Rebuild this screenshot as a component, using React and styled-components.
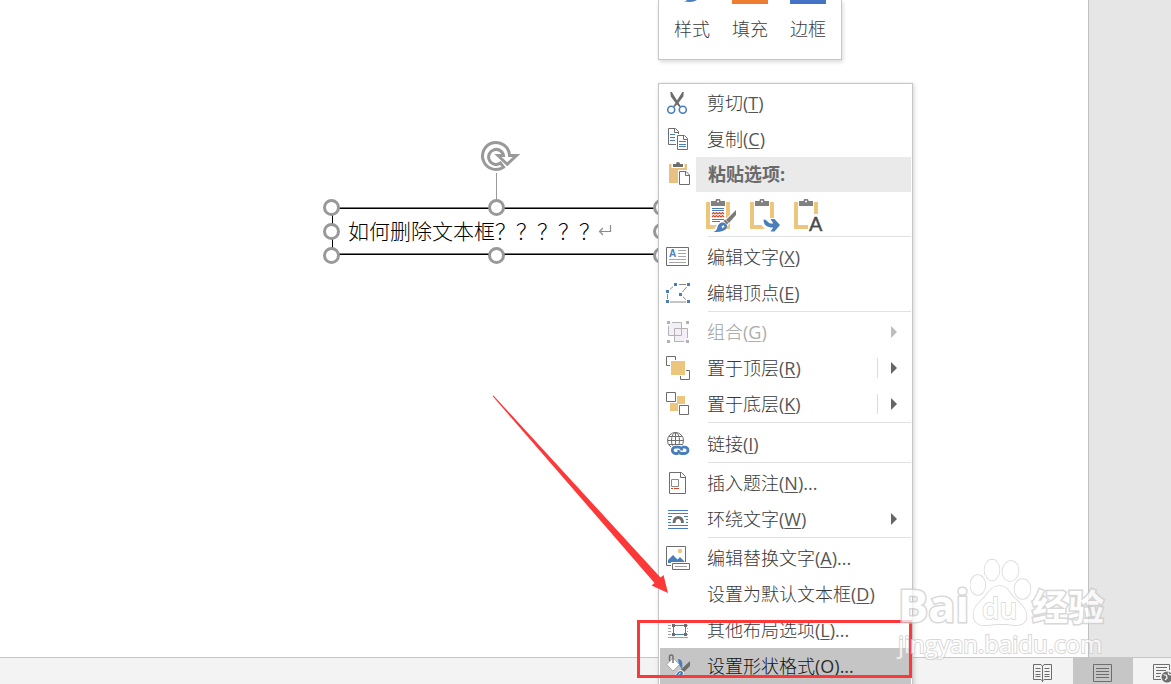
import React from "react";
import styled, { createGlobalStyle } from "styled-components";

const UI_FONT = `"Open Sans", "Noto Sans CJK SC", sans-serif`;

const GlobalStyle = createGlobalStyle`
  *, *::before, *::after { box-sizing: border-box; }
  body { margin: 0; background: #fff; font-family: ${UI_FONT}; }
  button { font: inherit; color: inherit; border: 0; margin: 0; padding: 0; background: none; }
  svg { display: block; flex: none; }
`;

const Screen = styled.div`
  position: relative;
  display: flex;
  flex-direction: column;
  height: 100vh;
  overflow: hidden;
`;

const Workspace = styled.main`
  display: flex;
  flex: 1;
  background: #e6e6e6;
`;

const Paper = styled.section`
  position: relative;
  flex: 1;
  background: #fff;
  border-right: 1px solid #c0c0c0;
`;

const Gutter = styled.div`
  width: 82px;
`;

/* Selected text box on the document canvas */

const TextBox = styled.div`
  position: absolute;
  left: 332px;
  top: 208px;
  width: 330px;
  height: 47px;
  padding: 0 0 4px 15px;
  display: flex;
  align-items: center;
  border: 1px solid #000;
  box-shadow: 0 -1px 0 #777, inset 0 -1px 0 #777;
  font: 300 21px/30px "Noto Sans CJK SC", sans-serif;
  color: #000;
`;

const ParagraphMark = styled.svg`
  margin: 2px 0 0 -2px;
`;

const Handle = styled.span`
  position: absolute;
  left: ${(p) => p.$x};
  top: ${(p) => p.$y};
  width: 17px;
  height: 17px;
  margin: -8px;
  border: 3px solid #999;
  border-radius: 50%;
  background: #fff;
`;

const RotateStem = styled.span`
  position: absolute;
  left: 50%;
  bottom: 100%;
  width: 1px;
  height: 34px;
  background: #999;
`;

const RotateHandle = styled.svg`
  position: absolute;
  left: 146px;
  top: -70px;
`;

/* Mini toolbar */

const MiniToolbar = styled.div`
  position: absolute;
  left: 658px;
  top: 0;
  height: 60px;
  padding: 0 15px;
  display: flex;
  gap: 22px;
  background: #fff;
  border: solid #c6c6c6;
  border-width: 0 1px 1px;
  box-shadow: 1px 2px 4px rgba(0, 0, 0, 0.15);
`;

const MiniButton = styled.button`
  width: 36px;
  display: flex;
  flex-direction: column;
  align-items: center;
  gap: 12px;
  font-size: 18px;
  font-weight: 300;
  line-height: 26px;
  color: #3c3c3c;
`;

const Swatch = styled.span`
  width: 36px;
  height: 4px;
  background: ${(p) => p.$color};
`;

/* Context menu */

const Menu = styled.div`
  position: absolute;
  left: 658px;
  top: 83px;
  width: 255px;
  padding: 1px 1px 8px 0;
  display: flex;
  flex-direction: column;
  background: #fff;
  border: 1px solid #c6c6c6;
  box-shadow: 1px 1px 4px rgba(0, 0, 0, 0.18);
`;

const Item = styled.button`
  display: flex;
  align-items: center;
  gap: 17px;
  margin-left: 1px;
  padding: 6px 14px 6px 6px;
  text-align: left;
  font-size: 18px;
  font-weight: 300;
  line-height: 24px;
  color: ${(p) => (p.$active ? "#111" : "#383838")};
  background: ${(p) => (p.$active ? "#c5c5c5" : "transparent")};
  &:disabled { color: #a0a0a0; }
`;

const IconSlot = styled.span`
  width: 24px;
  min-height: 24px;
  flex: none;
`;

const Label = styled.span`
  flex: 1;
  white-space: nowrap;
`;

const Latin = styled.span`
  font-weight: 400;
  opacity: 0.85;
`;

const Key = styled.span`
  text-decoration: underline;
  text-decoration-thickness: 1px;
  text-underline-offset: 2px;
`;

const SplitLine = styled.span`
  width: 1px;
  height: 20px;
  margin-right: -4px;
  background: #dcdcdc;
`;

const Separator = styled.hr`
  width: 203px;
  height: 1px;
  margin: 0 0 2px auto;
  border: 0;
  background: #dfe1e3;
`;

const PasteHeading = styled.div`
  display: flex;
  padding-left: 7px;
  gap: 6px;
`;

const PasteIconBox = styled.span`
  padding-top: 5px;
`;

const PasteTitle = styled.strong`
  flex: 1;
  height: 35px;
  padding-left: 12px;
  background: #eaeaea;
  font-size: 18px;
  font-weight: 700;
  line-height: 34px;
  color: #6a6a6a;
`;

const PasteOptions = styled.div`
  display: flex;
  gap: 14px;
  padding: 7px 0 1px 47px;
`;

/* Status bar */

const StatusBar = styled.footer`
  display: flex;
  justify-content: flex-end;
  height: 27px;
  background: #f3f3f3;
  border-top: 1px solid #c6c6c6;
  overflow: hidden;
`;

const ViewButtons = styled.div`
  display: flex;
  margin-right: -22px;
`;

const ViewButton = styled.button`
  width: 60px;
  padding: 6px 0 0 20px;
  display: flex;
  align-items: flex-start;
  background: ${(p) => (p.$active ? "#c6c6c6" : "transparent")};
`;

/* Annotations and watermark */

const RedFrame = styled.div`
  position: absolute;
  left: 637px;
  top: 620px;
  width: 275px;
  height: 58px;
  border: 3px solid #fd3838;
  pointer-events: none;
`;

const RedArrow = styled.svg`
  position: absolute;
  left: 492px;
  top: 395px;
  pointer-events: none;
`;

const Watermark = styled.div`
  position: absolute;
  left: 898px;
  top: 556px;
  width: 212px;
  color: #fff;
  -webkit-text-stroke: 3px #cbcbcb;
  paint-order: stroke fill;
  opacity: 0.75;
  pointer-events: none;
`;

const WatermarkRow = styled.div`
  display: flex;
  align-items: flex-end;
  height: 72px;
`;

const BrandText = styled.span`
  width: ${(p) => p.$width};
  white-space: nowrap;
  font-family: ${(p) => p.$family};
  font-size: ${(p) => p.$size};
  font-weight: 700;
  line-height: 46px;
`;

const SiteText = styled.div`
  font: 500 24px/32px "Open Sans", sans-serif;
  white-space: nowrap;
  -webkit-text-stroke-width: 2px;
`;

const G = "#6d6d6d";
const B = "#4a7ebb";
const T = "#edc67e";

const Svg = ({ h = 24, children }) => (
  <svg width="24" height={h} viewBox={`0 0 24 ${h}`} fill="none" aria-hidden="true">
    {children}
  </svg>
);

const CutIcon = () => (
  <Svg>
    <path d="M4.3 1 5.8 1 12.6 12 15 15.6 13.3 16 10 12.6 4.8 5.4Z" fill={G} />
    <path d="M17.8 1 16.3 1 9.5 12 7 15.6 8.7 16 12 12.6 17.3 5.4Z" fill={G} />
    <circle cx="5.2" cy="18.8" r="3.5" stroke={B} strokeWidth="1.6" />
    <circle cx="16.8" cy="18.8" r="3.5" stroke={B} strokeWidth="1.6" />
  </Svg>
);

const CopyIcon = () => (
  <Svg>
    <path d="M2.5 1.5h7l3 3v13h-10z" fill="#fff" stroke={G} />
    <path d="M8.5 1.5v4h4" stroke={G} />
    <path d="M4 7.5h5M4 10.5h5M4 13.5h5" stroke={B} />
    <path d="M10 7h8l5 5v12H10z" fill="#fff" />
    <path d="M11.5 8.5h7l3 3v11h-10z" fill="#fff" stroke={G} />
    <path d="M17.5 8.5v4h4" stroke={G} />
    <path d="M13 14.5h7M13 17.5h7M13 19.5h7" stroke={B} />
  </Svg>
);

const PasteIcon = () => (
  <Svg>
    <path d="M3 2h18v19H3z" fill="#e8c182" />
    <path d="M5.500 1h13v5h-13z" fill="#fff" />
    <path d="M7 2h3a2 2 0 0 1 4 0h3v3H7z" fill={G} />
    <path d="M12 8h12v16H12z" fill="#fff" />
    <path d="M13.500 9.500h6.500l3.500 3.500v9.500h-10z" fill="#fff" stroke={G} />
    <path d="M19.500 9.500v4h4" stroke={G} />
  </Svg>
);

const Clipboard = () => (
  <>
    <path d="M0 3h24v27H0z" fill={T} />
    <path d="M4 7h16v19H4z" fill="#fff" />
    <path d="M4 2h16v6H4z" fill="#fff" />
    <path d="M5 2h4.500a2.500 2.500 0 0 1 5 0H19v5H5z" fill="#808080" />
    <circle cx="12" cy="2.500" r="1" fill="#fff" />
  </>
);

const PasteSvg = ({ children }) => (
  <svg width="30" height="36" viewBox="0 0 30 36" fill="none" aria-hidden="true">
    <Clipboard />
    {children}
  </svg>
);

const KeepSourceIcon = () => (
  <PasteSvg>
    <path d="M6 9.500h12M6 11.500h12M6 20.500h12M6 22.500h8" stroke={B} />
    <path d="M6 15l1.500-1.500L9 15l1.500-1.500L12 15l1.500-1.500L15 15l1.500-1.500L18 15M6 18l1.500-1.500L9 18l1.500-1.500L12 18l1.500-1.500L15 18l1.500-1.500L18 18" stroke="#d24726" strokeWidth="1.2" />
    <path d="M30 9v9L20 28l-3 6H5l7-9 7-4z" fill="#fff" />
    <path d="M30 11v5l-7 8-3-3z" fill="#7a7a7a" />
    <path d="M19 20.500l3.500 3.500-1.500 1.500-3.500-3.500z" fill="#7a7a7a" />
    <path d="M16.500 23.500c2 0 4.500 1.500 4.500 3.500 0 4-4 6-13.500 6 3-1 3.500-3 4-5 .6-2.500 2.500-4.500 5-4.500z" fill={B} />
    <path d="M15.500 27.500l2-1.500 1 1.500-2 2z" fill="#fff" />
  </PasteSvg>
);

const MergeIcon = () => (
  <PasteSvg>
    <path d="M12 19h12v-2l6 8-7 9h-4l-7-7z" fill="#fff" />
    <path d="M13.500 20.500c5 .5 4 4.500 9 4h.8l-2.800-4.500h4l5.500 6-5.500 6.500h-4l2.800-4h-.8c-5 0-9-2-9-8z" fill={B} />
  </PasteSvg>
);

const TextOnlyIcon = () => (
  <PasteSvg>
    <path d="M18 15h6l6 17v2H14v-7z" fill="#fff" />
    <text x="15" y="32" fontFamily="Liberation Sans, sans-serif" fontSize="20" fill="#4a4a4a" stroke="#4a4a4a" strokeWidth="0.4">A</text>
  </PasteSvg>
);

const EditTextIcon = () => (
  <Svg>
    <path d="M.5 2.500h22v18H.5z" fill="#fff" stroke={G} />
    <path d="M12 5.500h8M12 8.500h8M12 11.500h8M3 14.500h17M3 17.500h17" stroke="#a6a6a6" />
    <text x="3" y="12" fontFamily="Liberation Sans, sans-serif" fontWeight="700" fontSize="10" fill={B}>A</text>
  </Svg>
);

const EditPointsIcon = () => (
  <Svg>
    <path d="M9.500 3.500h13l-8 10 8 7.500h-21V10.500z" stroke="#8c8c8c" />
    <path d="M7 1h6v5H7zM20 1h4v5h-4zM0 8h4v5H0zM12 11h5v5h-5zM0 18h4v5H0zM20 18h4v5h-4z" fill="#fff" />
    <path d="M8 2h3v3H8zM21 2h3v3h-3zM0 9h3v3H0zM13 12h3v3h-3zM0 19h3v3H0zM21 19h3v3h-3z" fill={B} />
  </Svg>
);

const GroupIcon = () => (
  <Svg>
    <path d="M2.500 2.500h13v13h-13zM8.500 8.500h13v13h-13z" fill="#f4eff7" />
    <path d="M6 2.500h9.500v13h-13V6M8.500 8.500h13V18M18 21.500H8.500v-13" stroke="#b3b3b3" />
    <path d="M1 1h3v3H1zM20 1h3v3h-3zM1 20h3v3H1zM20 20h3v3h-3z" fill="#b3b3b3" />
  </Svg>
);

const FrontIcon = () => (
  <Svg>
    <path d="M.5.5h9v9h-9zM14.500 14.500h9v9h-9z" fill="#fff" stroke={G} />
    <path d="M4 4h16v16H4z" fill="#fff" />
    <path d="M5 5h14v14H5z" fill={T} />
  </Svg>
);

const BackIcon = () => (
  <Svg>
    <path d="M11 4h8v8h-8zM4 11h8v8H4z" fill={T} />
    <path d="M0 0h11v11H0zM12 12h12v12H12z" fill="#fff" />
    <path d="M.5.5h9v9h-9zM13.500 13.500h9v9h-9z" fill="#fff" stroke={G} />
  </Svg>
);

const LinkIcon = () => (
  <Svg h={25}>
    <circle cx="9.500" cy="9.500" r="8" stroke={G} />
    <ellipse cx="9.500" cy="9.500" rx="4" ry="8" stroke={G} />
    <path d="M9.500 1.500v16M1.500 9.500h16M3 5.500h13M3 13.500h13" stroke={G} />
    <rect x="4" y="14" width="20" height="11" rx="5" fill="#fff" />
    <path d="M12.500 22.500H9.500a3.200 3.200 0 0 1 0-6.400h3.300c2 0 3.200 1.600 2.700 3.400" stroke={B} strokeWidth="2.800" />
    <path d="M15.800 16.100h3a3.200 3.200 0 0 1 0 6.400h-3.300c-2 0-3.200-1.600-2.700-3.400" stroke={B} strokeWidth="2.800" />
  </Svg>
);

const CaptionIcon = () => (
  <Svg>
    <path d="M3.500 1.500h12l4 4v17h-16z" fill="#fff" stroke={G} />
    <path d="M14.500 1.500v5h5" stroke={G} />
    <path d="M5.500 8.500h7v7h-7z" stroke="#8a8a8a" />
    <path d="M5 17.500h2M8 17.500h5" stroke="#d24726" />
  </Svg>
);

const WrapIcon = () => (
  <Svg>
    <path d="M2 3.500h20M2 6.500h20M2 9.500h4M18 9.500h4M2 12.500h3M20 12.500h2M2 15.500h3M20 15.500h2M2 18.500h20M2 21.500h20" stroke={B} />
    <path d="M8 16c0-7.500 8.500-7.500 8.500 0" stroke={G} strokeWidth="3" />
  </Svg>
);

const AltTextIcon = () => (
  <Svg>
    <path d="M.5.5h19v19H.5z" fill="#fff" stroke={G} />
    <circle cx="14" cy="5" r="2.200" fill={T} />
    <path d="M2 17v-3l5-5 4.500 4.500 2.500-2.500 4.500 4.500V17z" fill={B} />
    <path d="M5 16h19v8H5z" fill="#fff" />
    <path d="M6.500 17.500h17v6h-17z" fill="#fff" stroke={G} />
    <path d="M9 20.500h12" stroke="#a0a0a0" />
  </Svg>
);

const LayoutIcon = () => (
  <Svg>
    <path d="M2 7.500h3M2 10.500h3M2 13.500h3M2 16.500h3M2 19.500h20M21 7.500h1M21 10.500h1M21 13.500h1M21 16.500h1" stroke="#a0a0a0" />
    <path d="M7.500 7.500h12v9h-12z" fill="#fff" stroke={B} />
    <path d="M6 6h3v3H6zM18 6h3v3h-3zM6 15h3v3H6zM18 15h3v3h-3z" fill={G} />
  </Svg>
);

const FormatIcon = () => (
  <Svg>
    <path d="M12 5c4 0 5 4 4 10l-3-4z" fill={B} />
    <path d="M.8 10.500 7 4l6.500 6.500L7 17z" fill="#fff" stroke="#8a8a8a" strokeWidth=".6" />
    <path d="M3.500 7V2.500c0-2 3.500-2 3.500 0V9" stroke={G} strokeWidth="1.400" />
    <path d="M24 7v5l-6 6-3-2.500z" fill={G} />
    <path d="M9 23c1-4 3-6.500 6-6.500 2.500 0 3 2.500 2 4.500-1 2-4 3-8 3z" fill={B} stroke="#fff" />
    <path d="M12.500 20.500l2-1.500" stroke="#fff" />
  </Svg>
);

const ArrowGlyph = ({ color = "#666" }) => (
  <svg width="6" height="12" viewBox="0 0 6 12" aria-hidden="true">
    <path d="M0 0 6 6 0 12Z" fill={color} />
  </svg>
);

const groups = [
  [
    { icon: EditTextIcon, text: "编辑文字", k: "X" },
    { icon: EditPointsIcon, text: "编辑顶点", k: "E" },
  ],
  [
    { icon: GroupIcon, text: "组合", k: "G", sub: true, disabled: true },
    { icon: FrontIcon, text: "置于顶层", k: "R", sub: true, split: true },
    { icon: BackIcon, text: "置于底层", k: "K", sub: true, split: true },
  ],
  [{ icon: LinkIcon, text: "链接", k: "I" }],
  [
    { icon: CaptionIcon, text: "插入题注", k: "N", more: true },
    { icon: WrapIcon, text: "环绕文字", k: "W", sub: true },
  ],
  [
    { icon: AltTextIcon, text: "编辑替换文字", k: "A", more: true },
    { text: "设置为默认文本框", k: "D" },
    { icon: LayoutIcon, text: "其他布局选项", k: "L", more: true },
    { icon: FormatIcon, text: "设置形状格式", k: "O", more: true, active: true },
  ],
];

const MenuItem = ({ icon: Icon, text, k, more, sub, split, disabled, active }) => (
  <Item type="button" role="menuitem" disabled={disabled} $active={active}>
    <IconSlot>{Icon && <Icon />}</IconSlot>
    <Label>
      {text}
      <Latin>(<Key>{k}</Key>){more && "..."}</Latin>
    </Label>
    {split && <SplitLine />}
    {sub && <ArrowGlyph color={disabled ? "#bdbdbd" : "#666"} />}
  </Item>
);

const handles = [
  ["0px", "0px"], ["50%", "0px"], ["100%", "0px"],
  ["0px", "50%"], ["100%", "50%"],
  ["0px", "100%"], ["50%", "100%"], ["100%", "100%"],
];

const HandleLayer = styled.div`
  position: absolute;
  inset: -2px 0 -1px -2px;
`;

export default function App() {
  return (
    <Screen>
      <GlobalStyle />
      <Workspace>
        <Paper>
          <TextBox>
            <span>如何删除文本框？？？？？</span>
            <ParagraphMark width="14" height="12" viewBox="0 0 14 12" fill="none" aria-hidden="true">
              <path d="M12.500 0v6.500H1.500M5 3 1.500 6.500 5 10" stroke="#8c8c8c" strokeWidth="1.200" />
            </ParagraphMark>
            <HandleLayer>
              <RotateStem />
              {handles.map(([x, y]) => (
                <Handle key={x + y} $x={x} $y={y} />
              ))}
            </HandleLayer>
            <RotateHandle width="42" height="34" viewBox="0 0 42 34" fill="none" aria-hidden="true">
              <path d="M30.500 16.500h7l-9.300 8.800-9.200-8.800h5.500a7.500 7.500 0 1 0-3 7.500l3 4.200A13.500 13.500 0 1 1 30.500 16.500Z" fill="#fff" stroke="#999" strokeWidth="3" />
            </RotateHandle>
          </TextBox>
        </Paper>
        <Gutter />
      </Workspace>

      <StatusBar>
        <ViewButtons>
          <ViewButton type="button" aria-label="阅读视图">
            <svg width="20" height="18" viewBox="0 0 20 18" fill="none">
              <path d="M9.500 2.500 8 .500H.500v15H8l1.500 1.500L11 15.500h7.500V.500H11zM9.500 2v16" stroke={G} />
              <path d="M2.500 4.500h5M2.500 7.500h5M2.500 10.500h5M2.500 12.500h5M11.500 4.500h5M11.500 7.500h5M11.500 10.500h5M11.500 12.500h5" stroke={G} />
            </svg>
          </ViewButton>
          <ViewButton type="button" aria-label="页面视图" $active>
            <svg width="20" height="18" viewBox="0 0 20 18" fill="none">
              <path d="M.500.500h18v17H.500z" stroke={G} />
              <path d="M3 4.500h13M3 7.500h13M3 10.500h13M3 13.500h13" stroke={G} />
            </svg>
          </ViewButton>
          <ViewButton type="button" aria-label="Web 版式视图">
            <svg width="20" height="19" viewBox="0 0 20 19" fill="none">
              <path d="M16.500 6V.500H.500v15H8" stroke={G} />
              <path d="M3 3.500h11M3 6.500h10M3 9.500h5M3 12.500h4" stroke={G} />
              <circle cx="14" cy="13" r="5.500" fill={G} />
              <path d="M10.500 10.500l3 1 .5 2.500-2 2M15 8.500l1 2 2.500.5" stroke="#f3f3f3" strokeWidth="1.300" />
            </svg>
          </ViewButton>
        </ViewButtons>
      </StatusBar>

      <MiniToolbar>
        <MiniButton type="button">
          <svg width="36" height="4" viewBox="0 0 36 4" aria-hidden="true">
            <path d="M10 1.500Q12 1 13 0h10q-3 2-7 2z" fill={B} />
          </svg>
          样式
        </MiniButton>
        <MiniButton type="button">
          <Swatch $color="#ed7d31" />
          填充
        </MiniButton>
        <MiniButton type="button">
          <Swatch $color="#4472c4" />
          边框
        </MiniButton>
      </MiniToolbar>

      <Menu role="menu">
        <MenuItem icon={CutIcon} text="剪切" k="T" />
        <MenuItem icon={CopyIcon} text="复制" k="C" />
        <PasteHeading>
          <PasteIconBox><PasteIcon /></PasteIconBox>
          <PasteTitle>粘贴选项:</PasteTitle>
        </PasteHeading>
        <PasteOptions>
          <button type="button" aria-label="保留源格式"><KeepSourceIcon /></button>
          <button type="button" aria-label="合并格式"><MergeIcon /></button>
          <button type="button" aria-label="只保留文本"><TextOnlyIcon /></button>
        </PasteOptions>
        {groups.map((items) => (
          <React.Fragment key={items[0].k}>
            <Separator />
            {items.map((item) => (
              <MenuItem key={item.k} {...item} />
            ))}
          </React.Fragment>
        ))}
      </Menu>

      <RedArrow width="178" height="200" viewBox="0 0 178 200" aria-hidden="true">
        <path d="M.5 1 1.500.5 168.500 182.500 171.500 180 176 198 159.500 190.500 162.500 188Z" fill="#fd3838" />
      </RedArrow>
      <RedFrame />

      <Watermark>
        <WatermarkRow>
          <BrandText $width="72px" $size="45px" $family='"Open Sans", sans-serif'>Bai</BrandText>
          <svg width="62" height="72" viewBox="0 0 62 72" fill="#fff" stroke="#cbcbcb" strokeWidth="1.500" aria-hidden="true">
            <ellipse cx="22" cy="14" rx="7.500" ry="10.500" />
            <ellipse cx="40.500" cy="15" rx="8" ry="10" transform="rotate(8 40.500 15)" />
            <ellipse cx="7.800" cy="29" rx="7.500" ry="10" />
            <ellipse cx="52.500" cy="33" rx="8" ry="10" />
            <path d="M29.500 30c7 0 9 5 13 10 5 6 14 11 14 20 0 7-6 10-13 9-6-1-9-1-14-1s-8 1-14 1c-7 1-12-3-12-10 0-9 7-13 12-19 4-5 7-10 14-10Z" />
            <text x="12" y="63" fontFamily="Open Sans, sans-serif" fontWeight="600" fontSize="28">du</text>
          </svg>
          <BrandText $width="72px" $size="36px" $family='"Noto Sans CJK SC", sans-serif'>经验</BrandText>
        </WatermarkRow>
        <SiteText>jingyan.baidu.com</SiteText>
      </Watermark>
    </Screen>
  );
}
